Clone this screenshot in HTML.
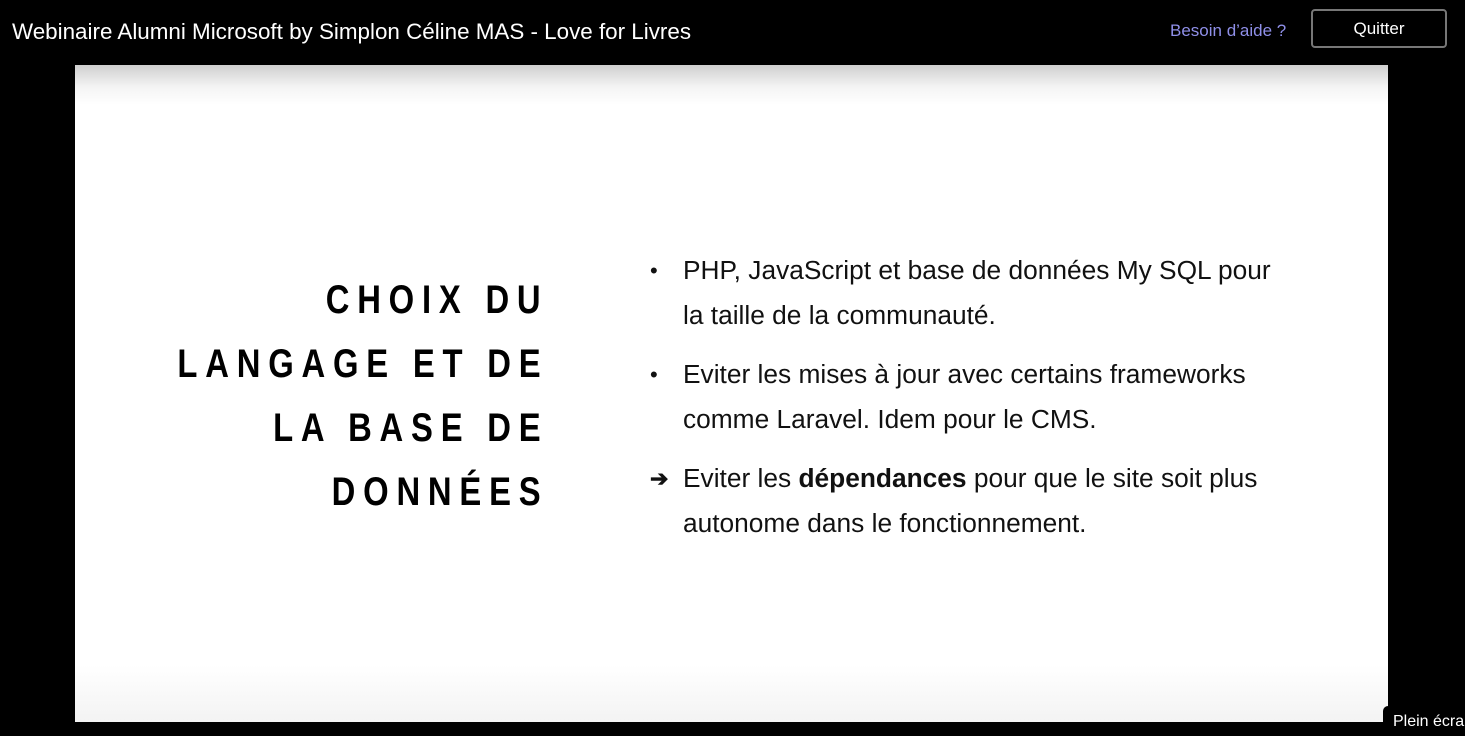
<!DOCTYPE html>
<html><head><meta charset="utf-8"><style>
body{margin:0;width:1465px;height:736px;background:#000;overflow:hidden;position:relative;font-family:"Liberation Sans",sans-serif}
.t{position:absolute;left:12px;top:19px;color:#fff;font-size:22.4px}
.h{position:absolute;left:1170px;top:21px;color:#8f8fe8;font-size:17px}
.q{position:absolute;left:1311px;top:9px;width:136px;height:39px;border:2px solid #777;border-radius:4px;box-sizing:border-box;color:#fff;font-size:17px;text-align:center;line-height:36px}
.s{position:absolute;left:75px;top:65px;width:1313px;height:657px;background:linear-gradient(#cfcfcf 0px,#f4f4f4 22px,#fff 40px,#fff 600px,#f3f3f3 657px)}
.ti{position:absolute;right:917px;top:268px;text-align:right;font-weight:bold;font-size:40px;letter-spacing:9.5px;line-height:64px;color:#000;transform:scaleX(0.82);transform-origin:right}
.b{position:absolute;left:683px;color:#111;font-size:26.3px;line-height:45px}
.d{position:absolute;left:650px;font-size:22px;color:#111}
.p{position:absolute;left:1383px;top:706px;width:82px;height:30px;background:#000;border-radius:5px 0 0 0;color:#fff;font-size:16px;padding:7px 0 0 10px;box-sizing:border-box;white-space:nowrap;overflow:hidden}
</style></head><body>
<div class="t">Webinaire Alumni Microsoft by Simplon Céline MAS - Love for Livres</div>
<div class="h">Besoin d’aide ?</div>
<div class="q">Quitter</div>
<div class="s"></div>
<div class="ti">CHOIX DU<br>LANGAGE ET DE<br>LA BASE DE<br>DONNÉES</div>
<div class="d" style="top:258px">•</div>
<div class="b" style="top:248px">PHP, JavaScript et base de données My SQL pour<br>la taille de la communauté.</div>
<div class="d" style="top:362px">•</div>
<div class="b" style="top:352px">Eviter les mises à jour avec certains frameworks<br>comme Laravel. Idem pour le CMS.</div>
<div class="d" style="top:466px;font-weight:bold">➔</div>
<div class="b" style="top:456px">Eviter les <b>dépendances</b> pour que le site soit plus<br>autonome dans le fonctionnement.</div>
<div class="p">Plein écran</div>
</body></html>
